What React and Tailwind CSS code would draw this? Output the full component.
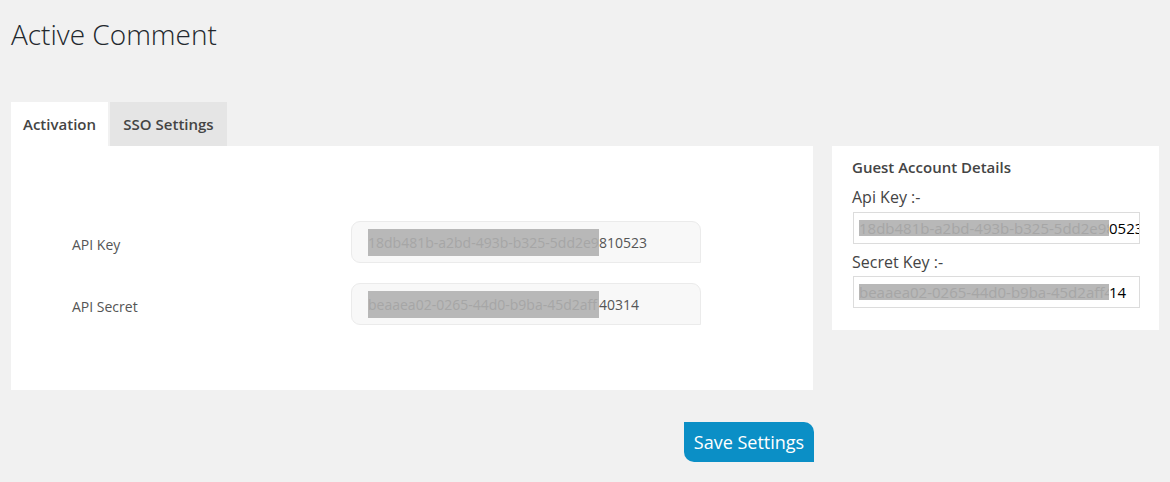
import React from 'react';

const font = { fontFamily: '"Open Sans", "Noto Sans", sans-serif' };

function KeyField({ hidden, shown }) {
  return (
    <div className="w-[350px] h-[42px] bg-[#f8f8f8] border border-[#ebebeb] rounded-tl-[9px] rounded-tr-[9px] rounded-bl-[9px] flex items-center pl-4 text-[14px] text-[#555]">
      <span className="bg-[#b8b8b8] text-[#a6a6a6] h-[27px] w-[231px] flex items-center overflow-hidden whitespace-nowrap">{hidden}</span>
      <span>{shown}</span>
    </div>
  );
}

function GuestField({ hidden, shown }) {
  return (
    <div className="w-[287px] h-[32px] bg-white border border-[#dcdcdc] flex items-center pl-[5px] text-[15px] text-black overflow-hidden whitespace-nowrap">
      <span className="bg-[#b8b8b8] text-[#a6a6a6] h-[16px] w-[250px] shrink-0 flex items-center overflow-hidden">{hidden}</span>
      <span>{shown}</span>
    </div>
  );
}

export default function App() {
  return (
    <div className="min-h-[482px] bg-[#f1f1f1] px-[11px] overflow-hidden" style={font}>
      <h1 className="pt-[15px] text-[28px] font-light text-[#23282d] leading-[38px]">Active Comment</h1>

      <div className="flex gap-[19px] mt-[49px]">
        {/* Left column */}
        <div className="w-[802px]">
          <div className="flex gap-[2px] h-[44px]">
            <div className="bg-white w-[97px] flex items-center justify-center text-[15px] font-semibold text-[#444]">Activation</div>
            <div className="bg-[#e5e5e5] w-[117px] flex items-center justify-center text-[15px] font-semibold text-[#444]">SSO Settings</div>
          </div>
          <div className="bg-white h-[244px] pt-[75px] pl-[61px]">
            <div className="flex items-center">
              <span className="w-[279px] text-[14px] text-[#555] pt-[4px]">API Key</span>
              <KeyField hidden="18db481b-a2bd-493b-b325-5dd2e9" shown="810523" />
            </div>
            <div className="flex items-center mt-[20px]">
              <span className="w-[279px] text-[14px] text-[#555] pt-[4px]">API Secret</span>
              <KeyField hidden="beaaea02-0265-44d0-b9ba-45d2aff" shown="40314" />
            </div>
          </div>
          <div className="flex justify-end mt-[32px]">
            <button className="bg-[#0b8fc6] text-white text-[18px] w-[130px] h-[40px] mr-[-1px] rounded-tr-[10px] rounded-bl-[10px]">Save Settings</button>
          </div>
        </div>

        {/* Right column */}
        <div className="w-[327px] mt-[44px] self-start bg-white pt-[11px] pl-[20px] pb-[22px]">
          <h3 className="text-[15px] font-semibold text-[#444] leading-[20px]">Guest Account Details</h3>
          <div className="text-[16px] text-[#444] mt-[9px] leading-[22px]">Api Key :-</div>
          <div className="mt-[4px] pl-[1px]">
            <GuestField hidden="18db481b-a2bd-493b-b325-5dd2e981" shown="0523" />
          </div>
          <div className="text-[16px] text-[#444] mt-[7px] leading-[22px]">Secret Key :-</div>
          <div className="mt-[3px] pl-[1px]">
            <GuestField hidden="beaaea02-0265-44d0-b9ba-45d2aff403" shown="14" />
          </div>
        </div>
      </div>
    </div>
  );
}
